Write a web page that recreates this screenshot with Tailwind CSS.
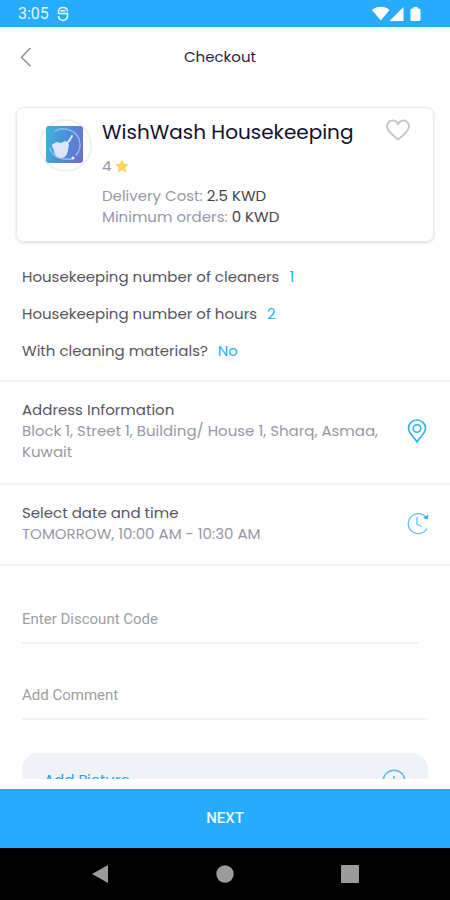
<!DOCTYPE html>
<html lang="en">
<head>
<meta charset="utf-8">
<meta name="viewport" content="width=device-width, initial-scale=1">
<title>Checkout</title>
<script src="https://cdn.jsdelivr.net/npm/@tailwindcss/browser@4"></script>
</head>
<body class="flex h-screen flex-col overflow-hidden bg-white font-['Poppins','Inter',sans-serif] text-[15px] leading-[21px] text-[#55555f]">
  <div class="flex h-[27px] shrink-0 items-center justify-between bg-[#27acfd] pr-7 pl-[18px] text-white">
    <div class="flex items-center gap-2">
      <span class="font-[Roboto,sans-serif] text-base text-[#e2f5ff]">3:05</span>
      <svg class="h-4 w-3" viewBox="0 0 12 16" fill="none" stroke="#e2f5ff" stroke-width="1.6" aria-hidden="true"><path d="M10.500 5.500C10.500 3 9 1.500 6 1.500S1.500 3 1.500 5.500v2h9V10c0 2.500-2 4-4.500 4.500C3.500 14 1.500 12.500 1.500 10M3.500 4.800h5"/></svg>
    </div>
    <svg class="h-4 w-[50px]" viewBox="0 0 50 16" fill="#fff" aria-hidden="true"><path d="M0 4C5-.3 12.500-.3 17.500 4L8.800 14.500zM31.500 1v14H17.500zM41.500 2.500V1h4v1.500h1.500q1.500 0 1.500 1.500v9.500q0 1.500-1.500 1.500h-7q-1.500 0-1.500-1.500V4q0-1.500 1.500-1.500z"/></svg>
  </div>

  <header class="grid h-[60px] shrink-0 grid-cols-[40px_1fr_40px] items-center px-[10px]">
    <button type="button" aria-label="Back" class="flex h-10 items-center pl-[10px]">
      <svg class="h-5 w-3" viewBox="0 0 12 20" fill="none" stroke="#8f8f98" stroke-width="1.500"><path d="M10.500 1 1.500 10.200l9 9"/></svg>
    </button>
    <h1 class="pr-[10px] pb-[2px] text-center text-[15px] font-normal text-[#26263a]">Checkout</h1>
  </header>

  <main class="mb-[10px] min-h-0 flex-1 overflow-hidden">
    <section class="mx-4 mt-5 flex h-[135px] gap-[10px] rounded-lg border border-[#ececee] px-[22px] pt-[11px] shadow-[0_1px_3px_rgba(0,0,0,0.14)]">
      <svg class="h-[53px] w-[53px] shrink-0" viewBox="0 0 53 53" role="img" aria-label="WishWash logo">
        <defs><linearGradient id="g" x1="0" y1="0.300" x2="1" y2="0.600"><stop offset="0" stop-color="#3db4dc"/><stop offset="0.500" stop-color="#4b8edb"/><stop offset="1" stop-color="#6f6fd0"/></linearGradient></defs>
        <circle cx="26.500" cy="26.500" r="25.500" fill="#fff" stroke="#edf2f3" stroke-width="2"/>
        <rect x="7" y="7" width="37" height="37" rx="3" fill="url(#g)"/>
        <path d="M16 12c9-5 24-1 25 13 .3 5-2 9-4 11M11 29c2 8 10 12 22 11" fill="none" stroke="#8cc0ee" stroke-width="1.400" stroke-linecap="round"/>
        <circle cx="34" cy="39" r="1.500" fill="#d9ebff"/>
        <path d="M26 25l4-3 3-5" fill="none" stroke="#dcecff" stroke-width="2" stroke-linecap="round"/>
        <path d="M13 25.500l5-2.500 4 1 4-2 4 3-1 6c-.5 5-3 8-7 8-4.500 0-7-4-7-8-1-1-2-3-2-5.500z" fill="#dce5fb"/>
      </svg>
      <div class="min-w-0 flex-1">
        <div class="flex items-start justify-between">
          <h2 class="text-xl leading-[27px] font-normal whitespace-nowrap text-[#111129]">WishWash Housekeeping</h2>
          <button type="button" aria-label="Add to favourites">
            <svg class="h-[22px] w-[26px]" viewBox="0 0 26 22" fill="none" stroke="#c5c9ce" stroke-width="2" stroke-linejoin="round"><path d="M13 20.500C9 17 2 12.500 2 7.500 2 4 4.500 1.500 7.500 1.500c2.500 0 4.500 1.500 5.500 3.800 1-2.300 3-3.800 5.500-3.800 3 0 5.500 2.500 5.500 6C24 12.500 17 17 13 20.500z"/></svg>
          </button>
        </div>
        <div class="mt-[9px] flex items-center gap-1 text-[#9797a5]">
          <span>4</span>
          <svg class="h-[14px] w-[14px]" viewBox="0 0 14 14" fill="#fdd45c" role="img" aria-label="stars"><path d="M7 .5l2 4.300 4.700.6-3.400 3.200.8 4.900L7 11.200l-4.100 2.300.8-4.900L.3 5.400 5 4.800z"/></svg>
        </div>
        <p class="mt-[9px] text-[#9797a5]">Delivery Cost: <span class="text-[#44444f]">2.5 KWD</span></p>
        <p class="text-[#9797a5]">Minimum orders: <span class="text-[#44444f]">0 KWD</span></p>
      </div>
    </section>

    <section class="flex flex-col gap-4 px-[22px] pt-6 pb-[19px]">
      <p>Housekeeping number of cleaners <span class="ml-[6px] text-[#27acfd]">1</span></p>
      <p>Housekeeping number of hours <span class="ml-[6px] text-[#27acfd]">2</span></p>
      <p>With cleaning materials? <span class="ml-[6px] text-[#27acfd]">No</span></p>
    </section>

    <button type="button" class="flex w-full items-center justify-between gap-3 border-t-2 border-[#f5f5f6] px-[22px] pt-[17px] pb-[21px] text-left">
      <span>
        <span class="block">Address Information</span>
        <span class="block text-[#9797a5]">Block 1, Street 1, Building/ House 1, Sharq, Asmaa, Kuwait</span>
      </span>
      <svg class="mr-[1px] h-6 w-5 shrink-0" viewBox="0 0 20 24" fill="none" stroke="#35aff2" stroke-width="1.600" aria-hidden="true"><path d="M10 23C8.500 19.500 1.500 14.500 1.500 9.200a8.500 8.200 0 0 1 17 0C18.500 14.500 11.500 19.500 10 23z"/><circle cx="10" cy="9.500" r="3.800"/></svg>
    </button>

    <button type="button" class="flex w-full items-center justify-between gap-3 border-y-2 border-[#f5f5f6] px-[22px] pt-[17px] pb-5 text-left">
      <span>
        <span class="block">Select date and time</span>
        <span class="block text-[#9797a5]">TOMORROW, 10:00 AM - 10:30 AM</span>
      </span>
      <svg class="-mr-[2px] h-6 w-6 shrink-0" viewBox="0 0 24 24" fill="none" stroke="#6bbcf5" stroke-width="1.300" aria-hidden="true"><path d="M20.500 7A10 10 0 1 0 21 17.500M11 6v7l4.500 2.500"/><path d="M22.500 3.500l-.8 5-4.700-1.500z" fill="#35aff2" stroke="none"/></svg>
    </button>

    <form class="px-[22px] pt-9 font-[Roboto,sans-serif]">
      <input type="text" aria-label="Enter Discount Code" placeholder="Enter Discount Code" class="block h-[42px] w-[calc(100%-10px)] border-b-2 border-[#f3f3f4] pb-[6px] text-[15px] outline-none placeholder:text-[#a0a0a0]">
      <input type="text" aria-label="Add Comment" placeholder="Add Comment" class="mt-[34px] block h-[42px] w-full border-b-2 border-[#f3f3f4] pb-[6px] text-[15px] outline-none placeholder:text-[#a0a0a0]">
      <button type="button" class="mt-[33px] flex h-[52px] w-full items-center justify-between rounded-2xl bg-[#eff3f7] px-[22px] font-['Poppins','Inter',sans-serif] text-[15px] leading-[21px] text-[#27a0f0]">
        <span>Add Picture</span>
        <svg class="h-6 w-6" viewBox="0 0 24 24" fill="none" stroke="#5cb4f2" stroke-width="1.400" aria-hidden="true"><circle cx="12" cy="14" r="10.800"/><path d="M12 9v11M6.500 14h11"/></svg>
      </button>
    </form>
  </main>

  <button type="button" class="h-[59px] shrink-0 bg-[#27acfd] font-[Roboto,sans-serif] text-[15px] font-medium text-[#eaf8ff]">NEXT</button>

  <nav class="flex h-[52px] shrink-0 items-center justify-center gap-[107px] bg-black" aria-label="System navigation">
    <button type="button" aria-label="Back"><svg class="h-[18px] w-[18px]" viewBox="0 0 18 18" fill="#9b9b9b"><path d="M17 0v18L1 9z"/></svg></button>
    <button type="button" aria-label="Home"><svg class="h-[18px] w-[18px]" viewBox="0 0 18 18" fill="#9b9b9b"><circle cx="9" cy="9" r="8.700"/></svg></button>
    <button type="button" aria-label="Recent apps"><svg class="h-[18px] w-[18px]" viewBox="0 0 18 18" fill="#9b9b9b"><rect width="18" height="18" rx="1"/></svg></button>
  </nav>
</body>
</html>
